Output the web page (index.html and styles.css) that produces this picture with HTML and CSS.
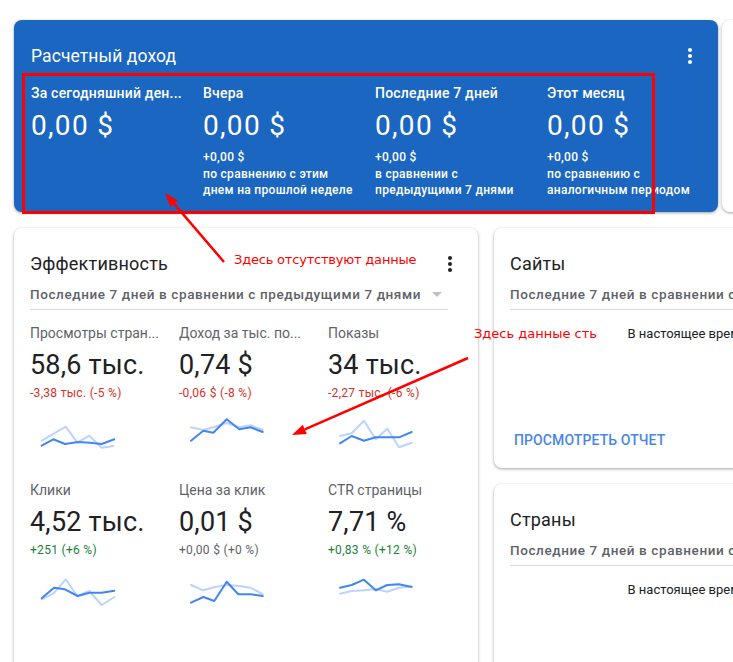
FILE: index.html
```html
<!DOCTYPE html>
<html lang="ru">
<head>
<meta charset="utf-8">
<title>AdSense</title>
<link rel="stylesheet" href="styles.css">
</head>
<body>
<div class="page">
  <div class="top-row">
    <section class="earnings">
      <div class="earn-head">
        <h2 class="earn-title">Расчетный доход</h2>
        <svg class="dots" width="6" height="18" viewBox="0 0 6 18"><circle cx="3" cy="3" r="2" fill="#fff"/><circle cx="3" cy="9" r="2" fill="#fff"/><circle cx="3" cy="15" r="2" fill="#fff"/></svg>
      </div>
      <div class="earn-cols">
        <div class="earn-col">
          <div class="earn-label" title="За сегодняшний день">За сегодняшний ден...</div>
          <div class="earn-value">0,00 $</div>
        </div>
        <div class="earn-col">
          <div class="earn-label">Вчера</div>
          <div class="earn-value">0,00 $</div>
          <div class="earn-sub">+0,00 $<br>по сравнению с этим<br>днем на прошлой неделе</div>
        </div>
        <div class="earn-col">
          <div class="earn-label">Последние 7 дней</div>
          <div class="earn-value">0,00 $</div>
          <div class="earn-sub">+0,00 $<br>в сравнении с<br>предыдущими 7 днями</div>
        </div>
        <div class="earn-col">
          <div class="earn-label">Этот месяц</div>
          <div class="earn-value">0,00 $</div>
          <div class="earn-sub">+0,00 $<br>по сравнению с<br>аналогичным периодом</div>
        </div>
      </div>
    </section>
    <div class="peek"></div>
  </div>

  <div class="grid">
    <section class="card perf">
      <div class="card-head">
        <h3 class="card-title">Эффективность</h3>
        <svg class="dots" width="6" height="18" viewBox="0 0 6 18"><circle cx="3" cy="3" r="2" fill="#202124"/><circle cx="3" cy="9" r="2" fill="#202124"/><circle cx="3" cy="15" r="2" fill="#202124"/></svg>
      </div>
      <div class="card-sub">
        <span>Последние 7 дней в сравнении с предыдущими 7 днями</span>
        <span class="caret"></span>
      </div>
      <div class="metrics">
        <div class="metric">
          <div class="m-label" title="Просмотры страниц">Просмотры стран...</div>
          <div class="m-value">58,6 тыс.</div>
          <div class="m-change neg">-3,38 тыс. (-5 %)</div>
          <svg class="spark" width="75" height="34" viewBox="0 0 75 34"><polyline class="sl-light" points="0.7,22.7 24.7,8.7 36.3,24.7 48.3,17.7 60.7,29.7 72.3,28"/><polyline class="sl-dark" points="0.7,27.7 12.3,21.3 24,26 37.3,24 49,24.7 60.7,26 73.3,21.3"/></svg>
        </div>
        <div class="metric">
          <div class="m-label" title="Доход за тыс. показов">Доход за тыс. по...</div>
          <div class="m-value">0,74 $</div>
          <div class="m-change neg">-0,06 $ (-8 %)</div>
          <svg class="spark" width="75" height="34" viewBox="0 0 75 34"><polyline class="sl-light" points="1,9.3 13.3,12 23.3,9.3 36.7,5 49.3,9.3 60.7,7.3 72.7,12"/><polyline class="sl-dark" points="1,22.7 13.3,12.7 23.3,14.7 36.7,1.3 49.3,11.3 60.7,9.3 72.7,14"/></svg>
        </div>
        <div class="metric">
          <div class="m-label">Показы</div>
          <div class="m-value">34 тыс.</div>
          <div class="m-change neg">-2,27 тыс. (-6 %)</div>
          <svg class="spark" width="75" height="34" viewBox="0 0 75 34"><polyline class="sl-light" points="1,18 12.7,15.3 25,2.7 36.7,21.3 48.3,10.7 60,29.3 72.7,24.7"/><polyline class="sl-dark" points="1,25.3 12.7,18 25,22.7 36.7,19.3 48.3,19.3 60,19.3 72.7,14"/></svg>
        </div>
        <div class="metric">
          <div class="m-label">Клики</div>
          <div class="m-value">4,52 тыс.</div>
          <div class="m-change pos">+251 (+6 %)</div>
          <svg class="spark" width="75" height="34" viewBox="0 0 75 34"><polyline class="sl-light" points="0.7,24.3 12.3,18.7 24.7,4.3 36.3,21 48.3,16 60.7,30 73.3,22"/><polyline class="sl-dark" points="0.7,23.3 13,12.7 24,14.3 36.7,21 48.3,17.7 60.7,17.7 73.3,15.7"/></svg>
        </div>
        <div class="metric">
          <div class="m-label">Цена за клик</div>
          <div class="m-value">0,01 $</div>
          <div class="m-change neu">+0,00 $ (+0 %)</div>
          <svg class="spark" width="75" height="34" viewBox="0 0 75 34"><polyline class="sl-light" points="1,10 13.3,15.3 25,12 36.7,10 49.3,11 60.7,12.7 72.7,19.3"/><polyline class="sl-dark" points="1,27.7 13.3,22 24.3,26 36.7,6.7 48.3,19.3 60.7,19.3 72.7,21"/></svg>
        </div>
        <div class="metric">
          <div class="m-label">CTR страницы</div>
          <div class="m-value">7,71 %</div>
          <div class="m-change pos">+0,83 % (+12 %)</div>
          <svg class="spark" width="75" height="34" viewBox="0 0 75 34"><polyline class="sl-light" points="1,18.7 12.7,16 25,15.3 36.7,14 48.3,16.7 60,12.7 72.7,11.3"/><polyline class="sl-dark" points="1,12.7 12.7,10 25,4.7 36.7,15.3 48.3,10 60,9.3 72.7,12"/></svg>
        </div>
      </div>
    </section>

    <div class="side">
      <section class="card sites">
        <div class="card-head">
          <h3 class="card-title">Сайты</h3>
        </div>
        <div class="card-sub"><span>Последние 7 дней в сравнении с предыдущими 7 днями</span></div>
        <div class="empty">В настоящее время данных нет</div>
        <div class="card-foot"><span class="link-btn">ПРОСМОТРЕТЬ ОТЧЕТ</span></div>
      </section>
      <section class="card countries">
        <div class="card-head">
          <h3 class="card-title">Страны</h3>
        </div>
        <div class="card-sub"><span>Последние 7 дней в сравнении с предыдущими 7 днями</span></div>
        <div class="empty">В настоящее время данных нет</div>
      </section>
    </div>
  </div>

  <div class="red-box"></div>
  <svg class="arrows" width="733" height="662" viewBox="0 0 733 662">
    <line x1="224" y1="262" x2="174" y2="203.6" stroke="#ff0000" stroke-width="2.5"/>
    <polygon points="165,193 177.9,200.4 170.3,206.9" fill="#ff0000"/>
    <line x1="468" y1="358" x2="304.8" y2="429.4" stroke="#ff0000" stroke-width="2.5"/>
    <polygon points="292,435 302.8,424.8 306.8,434" fill="#ff0000"/>
  </svg>
  <div class="note note-1">Здесь отсутствуют данные</div>
  <div class="note note-2">Здесь данные сть</div>
</div>
</body>
</html>
```

FILE: styles.css
```css
* { box-sizing: border-box; }

html, body {
  margin: 0;
  padding: 0;
  background: #ffffff;
}

body {
  font-family: Roboto, "Noto Sans", Arial, sans-serif;
  color: #202124;
  width: 733px;
  height: 662px;
  overflow: hidden;
}

.page {
  position: relative;
  width: 733px;
  height: 662px;
  padding: 20px 0 0 14px;
  overflow: hidden;
}

/* ---------- top earnings card ---------- */
.top-row {
  display: flex;
  gap: 4px;
  width: 1000px;
}

.earnings {
  flex: 0 0 704px;
  width: 704px;
  min-width: 0;
  height: 192px;
  background: #1a66c0;
  border-radius: 8px;
  color: #ffffff;
  padding: 22px 25px 0 17px;
  box-shadow: 0 1px 2px rgba(60, 64, 67, .3), 0 1px 3px 1px rgba(60, 64, 67, .15);
}

.earn-head {
  display: flex;
  justify-content: space-between;
  align-items: center;
  height: 28px;
}

.earn-title {
  margin: 0;
  font-size: 17.5px;
  font-weight: 400;
  line-height: 28px;
  letter-spacing: 0.1px;
}

.dots { display: block; flex: none; }

.earn-cols {
  display: grid;
  grid-template-columns: 172px 172px 172px 1fr;
  margin-top: 13px;
}

.earn-col {
  padding-right: 16px;
  min-width: 0;
}

.earn-label {
  font-size: 14px;
  font-weight: 500;
  line-height: 20px;
  letter-spacing: 0.2px;
  white-space: nowrap;
  overflow: hidden;
}

.earn-value {
  margin-top: 5px;
  font-size: 28px;
  line-height: 36px;
  font-weight: 400;
  letter-spacing: 1.3px;
}

.earn-sub {
  margin-top: 5px;
  font-size: 12px;
  font-weight: 500;
  line-height: 16.5px;
  letter-spacing: 0.3px;
  white-space: nowrap;
}

.peek {
  flex: 0 0 100px;
  height: 192px;
  background: #ffffff;
  border-radius: 8px;
  box-shadow: 0 1px 2px rgba(60, 64, 67, .3), 0 1px 3px 1px rgba(60, 64, 67, .15);
}

/* ---------- cards ---------- */
.grid {
  display: flex;
  gap: 16px;
  margin-top: 16px;
  width: 1000px;
}

.card {
  background: #ffffff;
  border-radius: 8px;
  box-shadow: 0 1px 2px rgba(60, 64, 67, .3), 0 1px 3px 1px rgba(60, 64, 67, .15);
  padding: 24px 16px 0 16px;
  min-width: 0;
}

.perf {
  flex: 0 0 464px;
  width: 464px;
  height: 470px;
}

.side {
  flex: 0 0 464px;
  width: 464px;
  display: flex;
  flex-direction: column;
  gap: 16px;
}

.sites {
  height: 240px;
  display: flex;
  flex-direction: column;
  padding-bottom: 18px;
}

.countries {
  height: 200px;
}

.card-head {
  display: flex;
  justify-content: space-between;
  align-items: center;
  height: 24px;
  padding-right: 9px;
}

.card-title {
  margin: 0;
  font-size: 18px;
  font-weight: 400;
  line-height: 24px;
  color: #202124;
  letter-spacing: 0.2px;
}

.card-sub {
  margin-top: 8px;
  margin-right: 14px;
  padding-bottom: 5px;
  border-bottom: 1px solid #dadce0;
  display: flex;
  align-items: center;
  justify-content: space-between;
  font-size: 13.5px;
  font-weight: 500;
  line-height: 20px;
  letter-spacing: 0.6px;
  color: #5f6368;
  white-space: nowrap;
  overflow: hidden;
}

.caret {
  flex: none;
  width: 0;
  height: 0;
  border-left: 5px solid transparent;
  border-right: 5px solid transparent;
  border-top: 5px solid #bdc1c6;
  margin-right: 6px;
}

/* ---------- metrics ---------- */
.metrics {
  display: grid;
  grid-template-columns: 149px 149px 1fr;
  row-gap: 28px;
  margin-top: 13px;
}

.metric { min-width: 0; padding-right: 8px; }

.m-label {
  font-size: 14px;
  line-height: 20px;
  color: #5f6368;
  white-space: nowrap;
  overflow: hidden;
}

.m-value {
  margin-top: 6px;
  font-size: 27px;
  line-height: 32px;
  color: #202124;
  letter-spacing: 0.2px;
  white-space: nowrap;
}

.m-change {
  margin-top: 4px;
  font-size: 12px;
  line-height: 16px;
  letter-spacing: 0.3px;
  white-space: nowrap;
}

.neg { color: #d93025; }
.pos { color: #188038; }
.neu { color: #5f6368; }

.spark {
  display: block;
  margin: 17px 0 0 11px;
  overflow: visible;
}

.sl-light, .sl-dark {
  fill: none;
  stroke-width: 2;
  stroke-linejoin: round;
  stroke-linecap: round;
}
.sl-light { stroke: #bcd3fb; }
.sl-dark { stroke: #4285f4; }

/* ---------- empty state ---------- */
.empty {
  margin-top: 14px;
  padding-right: 4px;
  text-align: center;
  font-size: 13px;
  line-height: 20px;
  color: #202124;
}

.card-foot {
  margin-top: auto;
}

.link-btn {
  display: inline-block;
  margin-left: 4px;
  font-size: 14px;
  font-weight: 500;
  line-height: 20px;
  color: #4a86e8;
  letter-spacing: 0.1px;
}

/* ---------- annotations overlay ---------- */
.red-box {
  position: absolute;
  left: 22px;
  top: 73px;
  width: 633px;
  height: 141px;
  border: 3px solid #ff0000;
  pointer-events: none;
}

.arrows {
  position: absolute;
  left: 0;
  top: 0;
  pointer-events: none;
}

.note {
  position: absolute;
  font-family: "DejaVu Sans", Verdana, sans-serif;
  font-size: 13px;
  line-height: 16px;
  color: #ff0000;
  white-space: nowrap;
}

.note-1 { left: 234px; top: 252px; letter-spacing: -0.2px; }
.note-2 { left: 474px; top: 326px; }
```
